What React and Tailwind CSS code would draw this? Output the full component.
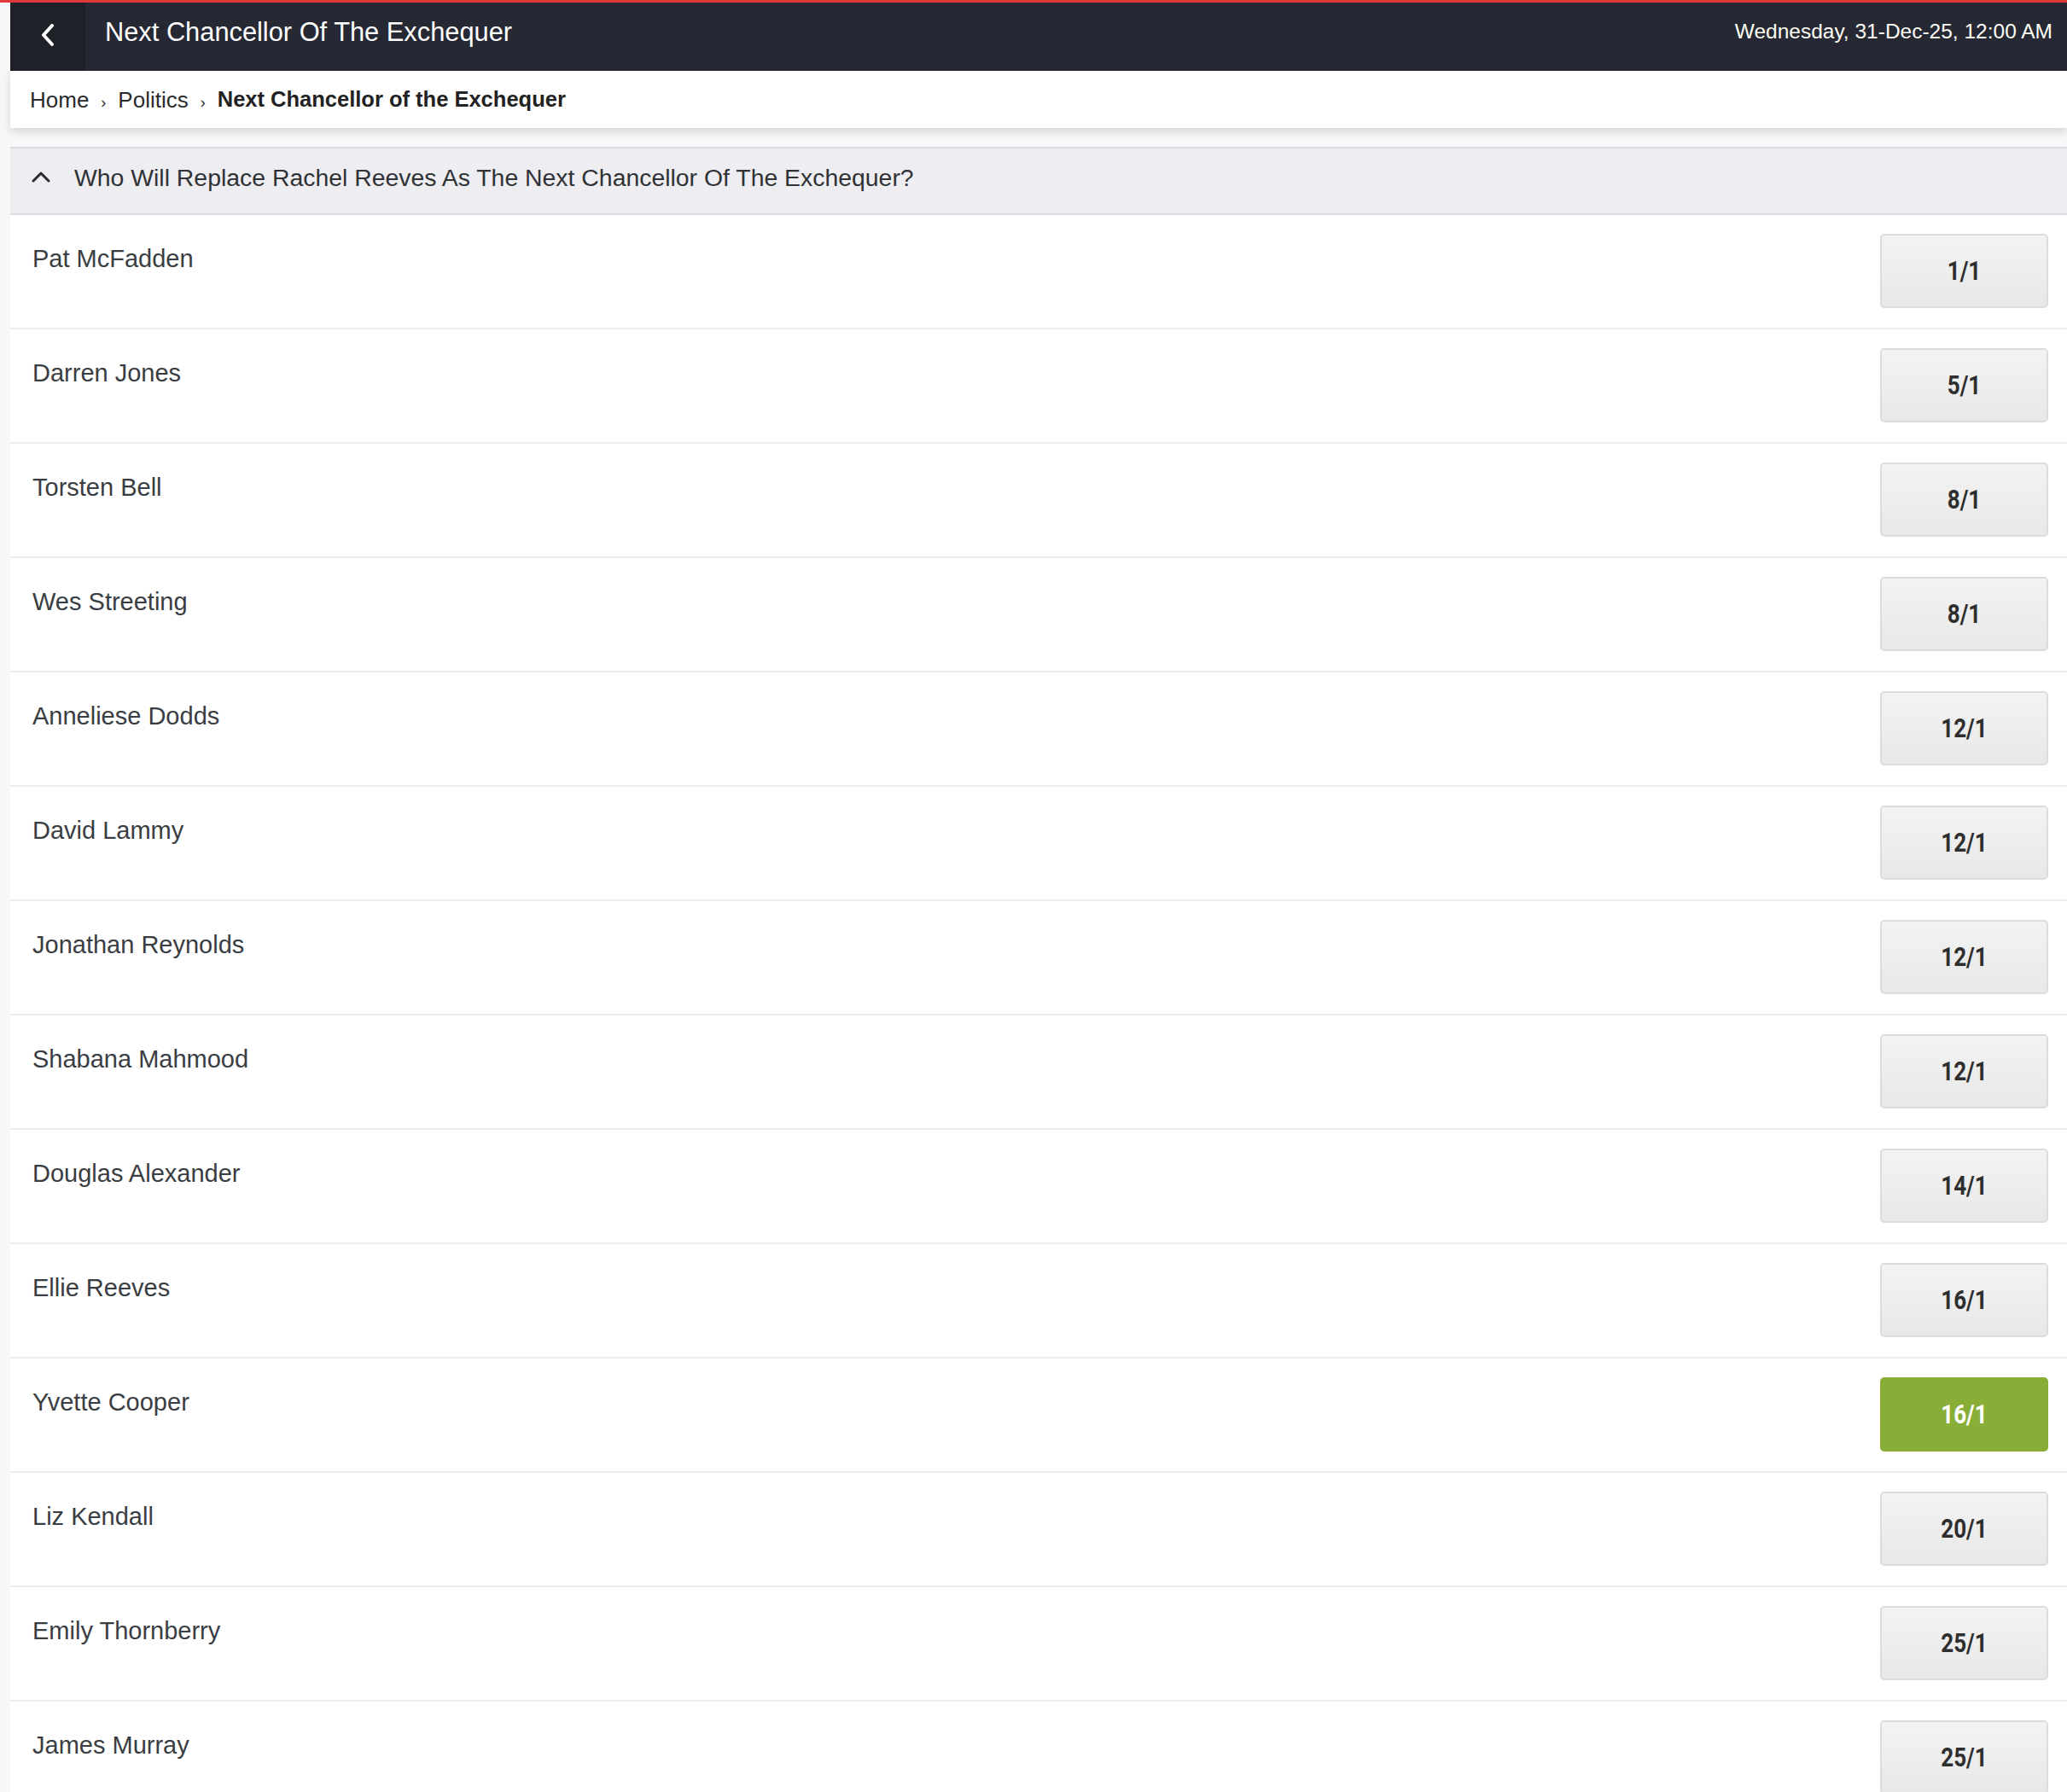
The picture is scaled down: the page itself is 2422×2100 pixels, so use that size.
import React from 'react'

const RUNNERS = [
  { name: 'Pat McFadden', odds: '1/1' },
  { name: 'Darren Jones', odds: '5/1' },
  { name: 'Torsten Bell', odds: '8/1' },
  { name: 'Wes Streeting', odds: '8/1' },
  { name: 'Anneliese Dodds', odds: '12/1' },
  { name: 'David Lammy', odds: '12/1' },
  { name: 'Jonathan Reynolds', odds: '12/1' },
  { name: 'Shabana Mahmood', odds: '12/1' },
  { name: 'Douglas Alexander', odds: '14/1' },
  { name: 'Ellie Reeves', odds: '16/1' },
  { name: 'Yvette Cooper', odds: '16/1', selected: true },
  { name: 'Liz Kendall', odds: '20/1' },
  { name: 'Emily Thornberry', odds: '25/1' },
  { name: 'James Murray', odds: '25/1' },
]

function OddsButton({ odds, selected }) {
  const base =
    'flex h-[87px] w-[197px] items-center justify-center rounded-[5px] font-["Roboto",sans-serif] text-[31px] font-bold leading-none'
  return (
    <button
      className={
        selected
          ? base + ' bg-[#89ae37] text-white'
          : base + ' border-2 border-[#dcdcdc] bg-gradient-to-b from-[#f3f3f3] to-[#e8e8e8] text-[#2e2e2e]'
      }
    >
      <span className="inline-block scale-x-[0.84]">{odds}</span>
    </button>
  )
}

export default function App() {
  return (
    <div className="min-h-screen bg-[#f7f7f7] font-['Liberation_Sans',Arial,sans-serif]">
      <div className="h-[3px] bg-[#e23a3a]" />
      <div className="pl-[12px]">
        {/* top bar */}
        <header className="flex h-[80px] items-start bg-[#262933] text-white">
          <div className="flex h-full w-[88px] justify-center bg-[#1f2129] pt-[25px]">
            <svg width="18" height="26" viewBox="0 0 18 26" fill="none">
              <polyline
                points="14,2 4,13 14,24"
                stroke="white"
                strokeWidth="4"
                strokeLinecap="round"
                strokeLinejoin="round"
              />
            </svg>
          </div>
          <h1 className="ml-[23px] pt-[20px] text-[30.8px] leading-none font-normal">
            Next Chancellor Of The Exchequer
          </h1>
          <div className="ml-auto pr-[17px] pt-[22px] text-[24.5px] leading-none text-[#fdfdf5]">
            Wednesday, 31-Dec-25, 12:00 AM
          </div>
        </header>

        {/* breadcrumb */}
        <nav className="relative z-10 flex h-[67px] items-center bg-white pl-[23px] text-[26px] leading-none text-[#2b2b2b] shadow-[0_4px_10px_rgba(0,0,0,0.14)]">
          <span>Home</span>
          <span className="mx-[14px] pt-[6px] text-[18px]">›</span>
          <span>Politics</span>
          <span className="mx-[14px] pt-[6px] text-[18px]">›</span>
          <span className="text-[25.5px] font-bold text-[#222]">Next Chancellor of the Exchequer</span>
        </nav>

        {/* market */}
        <section className="mt-[22px]">
          <div className="flex h-[80px] items-start border-y-2 border-[#dddce3] bg-[#eeedf2] pt-[20px] text-[28.4px] leading-none text-[#303236]">
            <svg className="ml-[24px] mt-[5px]" width="24" height="16" viewBox="0 0 24 16" fill="none">
              <polyline
                points="3,13 12,4 21,13"
                stroke="#2a2c30"
                strokeWidth="3"
                strokeLinecap="round"
                strokeLinejoin="round"
              />
            </svg>
            <span className="ml-[27px]">
              Who Will Replace Rachel Reeves As The Next Chancellor Of The Exchequer?
            </span>
          </div>

          <ul className="bg-white">
            {RUNNERS.map(r => (
              <li
                key={r.name}
                className="flex h-[134px] items-start justify-between border-b-2 border-[#ecebf0]"
              >
                <span className="pl-[26px] pt-[37px] text-[29px] leading-[29px] text-[#3a3d42]">
                  {r.name}
                </span>
                <div className="pr-[22px] pt-[22px]">
                  <OddsButton odds={r.odds} selected={r.selected} />
                </div>
              </li>
            ))}
          </ul>
        </section>
      </div>
    </div>
  )
}
